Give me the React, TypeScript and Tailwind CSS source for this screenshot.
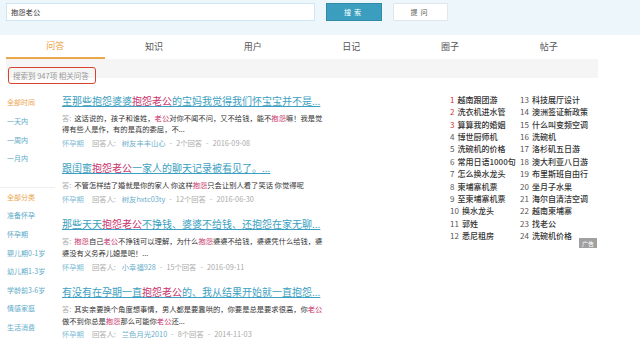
import React from "react"

type Part = { t: string; hl?: boolean }

type Result = {
  title: Part[]
  answer: Part[]
  user: string
  count: string
  date: string
}

const results: Result[] = [
  {
    title: [{ t: "至那些抱怨婆婆" }, { t: "抱怨老公", hl: true }, { t: "的宝妈我觉得我们怀宝宝并不是..." }],
    answer: [
      { t: "这话说的，孩子和谁姓，" },
      { t: "老公", hl: true },
      { t: "对你不闻不问，又不给钱，能不" },
      { t: "抱怨", hl: true },
      { t: "嘛！我是觉得有些人是作，有的是真的委屈，不..." },
    ],
    user: "树友丰丰山心",
    count: "2个回答",
    date: "2016-09-08",
  },
  {
    title: [{ t: "跟闺蜜" }, { t: "抱怨老公", hl: true }, { t: "一家人的聊天记录被看见了。..." }],
    answer: [
      { t: "不管怎样结了婚就是你的家人 你这样" },
      { t: "抱怨", hl: true },
      { t: "只会让别人看了笑话 你觉得呢" },
    ],
    user: "树友hxtc03ty",
    count: "12个回答",
    date: "2016-06-30",
  },
  {
    title: [{ t: "那些天天" }, { t: "抱怨老公", hl: true }, { t: "不挣钱、婆婆不给钱、还抱怨在家无聊..." }],
    answer: [
      { t: "抱怨", hl: true },
      { t: "自己" },
      { t: "老公", hl: true },
      { t: "不挣钱可以理解，为什么" },
      { t: "抱怨", hl: true },
      { t: "婆婆不给钱，婆婆凭什么给钱，婆婆没有义务养儿媳是吧！..." },
    ],
    user: "小幸福928",
    count: "15个回答",
    date: "2016-09-11",
  },
  {
    title: [{ t: "有没有在孕期一直" }, { t: "抱怨老公", hl: true }, { t: "的、我从结果开始就一直抱怨..." }],
    answer: [
      { t: "其实亲要换个角度想事情，男人都是要靠哄的，你要是总是要求很高，你" },
      { t: "老公", hl: true },
      { t: "做不到你总是" },
      { t: "抱怨", hl: true },
      { t: "那么可能你" },
      { t: "老公", hl: true },
      { t: "还..." },
    ],
    user: "兰色月光2010",
    count: "8个回答",
    date: "2014-11-03",
  },
]

const tabs = ["问答", "知识", "用户", "日记", "圈子", "帖子"]

const timeFilters = ["一天内", "一周内", "一月内"]
const categories = ["准备怀孕", "怀孕期", "婴儿期0-1岁", "幼儿期1-3岁", "学龄前3-6岁", "情感家庭", "生活消费"]

const hotLeft = [
  "越南跟团游", "洗衣机进水管", "算算我的婚姻", "博世厨师机", "洗碗机的价格", "常用日语1000句",
  "怎么换水龙头", "柬埔寨机票", "至柬埔寨机票", "换水龙头", "郭姓", "悉尼租房",
]
const hotRight = [
  "科技展厅设计", "澳洲签证新政策", "什么叫变频空调", "洗碗机", "洛杉矶五日游", "澳大利亚八日游",
  "布里斯班自由行", "坐月子水果", "海尔自清洁空调", "越南柬埔寨", "找老公", "洗碗机价格",
]

function Highlighted({ parts }: { parts: Part[] }) {
  return (
    <>
      {parts.map((p, i) =>
        p.hl ? (
          <span key={i} className="text-[#c8336b]">
            {p.t}
          </span>
        ) : (
          <React.Fragment key={i}>{p.t}</React.Fragment>
        )
      )}
    </>
  )
}

export default function App() {
  return (
    <div className="w-[640px] h-[344px] overflow-hidden bg-white font-['Noto_Sans_CJK_SC',sans-serif]">
      {/* search header */}
      <div className="h-[35px] bg-[#edf6fb] flex items-start pt-[3px] pl-[6px]">
        <div className="w-[309px] h-[18px] bg-white border border-[#cfe5f1] flex items-center pl-[4px] text-[7.3px] text-[#333]">
          抱怨老公
        </div>
        <div className="ml-[11px] w-[56px] h-[18px] bg-[#3b9ebf] border border-[#318aa8] flex items-center justify-center text-white text-[7px] tracking-[3px]">
          搜索
        </div>
        <div className="ml-[11px] w-[55px] h-[18px] bg-white border border-[#e0e8ee] flex items-center justify-center text-[#555] text-[7px] tracking-[3px]">
          提问
        </div>
      </div>

      {/* tabs */}
      <div className="ml-[6px] w-[592px] h-[24px] grid grid-cols-6">
        {tabs.map((t, i) => (
          <div
            key={t}
            className={
              i === 0
                ? "flex items-center justify-center text-[9px] text-[#e9a246] border-b-2 border-[#eba74d]"
                : "flex items-center justify-center text-[9px] text-[#555]"
            }
          >
            {t}
          </div>
        ))}
      </div>
      <div className="ml-[6px] w-[592px] h-[19px] bg-[#f5f5f5] pt-[1px] pl-[2px]">
        <div className="inline-flex items-center h-[17px] w-[88px] border-[1.5px] border-[#d9432c] rounded-[3px] pl-[4px] text-[7.5px] text-[#999]">
          搜索到 947项 相关问答
        </div>
      </div>

      {/* body */}
      <div className="flex">
        <div className="w-[62px] pt-[15.4px]">
          <div className="pl-[7px] text-[7px] leading-[18.6px] text-[#eba54c]">全部时间</div>
          {timeFilters.map((f) => (
            <div key={f} className="pl-[7px] text-[7px] leading-[18.6px] text-[#5eabc9]">
              {f}
            </div>
          ))}
          <div className="mt-[19px] w-[55px] border-t border-[#eeeeee]" />
          <div className="pl-[7px] text-[7px] leading-[18.6px] text-[#eba54c]">全部分类</div>
          {categories.map((c) => (
            <div key={c} className="pl-[7px] text-[7px] leading-[18.6px] text-[#5eabc9]">
              {c}
            </div>
          ))}
        </div>

        <div className="w-[262px] pt-[15.7px]">
          {results.map((r, i) => (
            <div key={i} className="mb-[12.5px]">
              <div className="whitespace-nowrap text-[10px] leading-[14px] text-[#3d9fc1] underline underline-offset-[1px] mb-[5px]">
                <Highlighted parts={r.title} />
              </div>
              <p className="text-[7.3px] leading-[11.6px] text-[#333]">
                <span className="text-[#aaa] mr-[3px]">答:</span>
                <Highlighted parts={r.answer} />
              </p>
              <div className="mt-[1px] flex text-[7.3px] leading-[12px] text-[#aaa] whitespace-nowrap">
                <span className="text-[#80bdd5]">怀孕期</span>
                <span className="ml-[8px]">回答人:</span>
                <span className="ml-[6px] text-[#6aaecb]">{r.user}</span>
                <span className="mx-[4px]">-</span>
                <span>{r.count}</span>
                <span className="mx-[4px]">-</span>
                <span>{r.date}</span>
              </div>
            </div>
          ))}
        </div>

        <div className="ml-[126px] pt-[15.8px] relative flex">
          <div className="w-[70px]">
            {hotLeft.map((h, i) => (
              <div key={h} className="text-[8px] leading-[12.4px] whitespace-nowrap">
                <span className={i < 3 ? "text-[#d0342c]" : "text-[#555]"}>{i + 1}</span>
                <span className="ml-[3px] text-[#333] font-medium">{h}</span>
              </div>
            ))}
          </div>
          <div className="w-[70px]">
            {hotRight.map((h, i) => (
              <div key={h} className="text-[8px] leading-[12.4px] whitespace-nowrap">
                <span className="text-[#555]">{i + 13}</span>
                <span className="ml-[3px] text-[#333] font-medium">{h}</span>
              </div>
            ))}
          </div>
          <div className="absolute left-[129px] top-[160px] w-[18px] h-[10px] bg-[#a0a0a0] flex items-center justify-center text-[6px] text-white">
            广告
          </div>
        </div>
      </div>
    </div>
  )
}
